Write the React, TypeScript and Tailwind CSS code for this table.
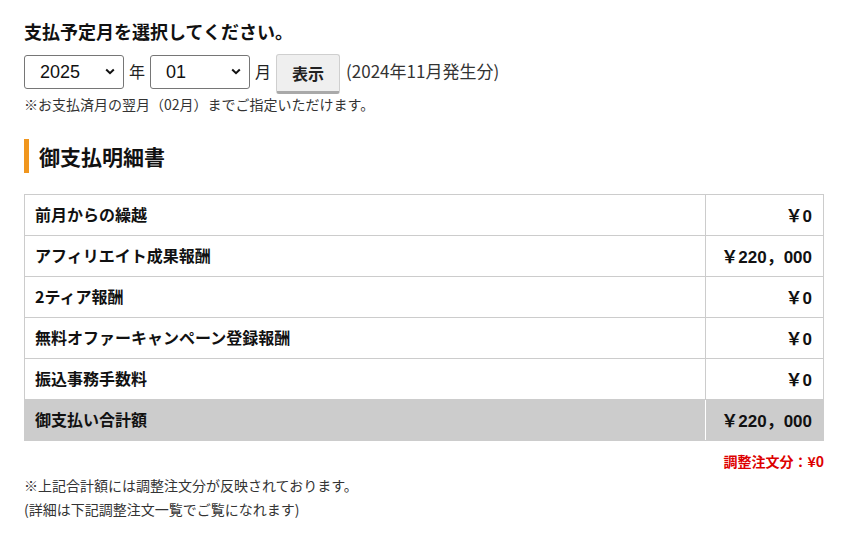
import React from 'react'

const rows = [
  { label: '前月からの繰越', value: '￥0' },
  { label: 'アフィリエイト成果報酬', value: '￥220，000' },
  { label: '2ティア報酬', value: '￥0' },
  { label: '無料オファーキャンペーン登録報酬', value: '￥0' },
  { label: '振込事務手数料', value: '￥0' },
]

function Chevron() {
  return (
    <svg className="pointer-events-none absolute right-[9px] top-[13px]" width="10" height="7" viewBox="0 0 10 7">
      <path d="M1.2 1.5 L5 5.2 L8.8 1.5" fill="none" stroke="#111" strokeWidth="2" />
    </svg>
  )
}

function Select({ value, options }: { value: string; options: string[] }) {
  return (
    <div className="relative">
      <select
        defaultValue={value}
        className="appearance-none w-[100px] h-[34px] rounded-[3px] border border-[#767676] bg-white pl-[15px] text-[18px] text-[#111] outline-none"
        style={{ fontFamily: '"Liberation Sans", Arial, sans-serif' }}
      >
        {options.map(o => (
          <option key={o} value={o}>{o}</option>
        ))}
      </select>
      <Chevron />
    </div>
  )
}

export default function App() {
  const months = ['01', '02', '03', '04', '05', '06', '07', '08', '09', '10', '11', '12']
  return (
    <div
      className="w-[861px] min-h-[534px] bg-white px-6 pt-[18px] text-[#222]"
      style={{ fontFamily: '"Noto Sans CJK JP", "Noto Sans", sans-serif' }}
    >
      <h2 className="text-[18px] font-bold leading-[26px] text-[#111]">支払予定月を選択してください。</h2>

      <div className="mt-[11px] flex items-start">
        <Select value="2025" options={['2024', '2025', '2026']} />
        <span className="mx-[5px] mt-[4px] text-[16px] leading-[24px]">年</span>
        <Select value="01" options={months} />
        <span className="mx-[5px] mt-[4px] text-[16px] leading-[24px]">月</span>
        <button className="-mt-px h-[40px] w-[64px] rounded-[3px] border border-[#cfcfcf] border-b-[3px] border-b-[#a9a9a9] bg-[#efefef] text-[16px] font-bold text-[#222]">
          表示
        </button>
        <span className="ml-[6px] mt-[4px] text-[17px] leading-[24px] text-[#333]">(2024年11月発生分)</span>
      </div>
      <p className="mt-[1px] text-[14px] leading-[18px] text-[#333]">※お支払済月の翌月（02月）までご指定いただけます。</p>

      <div className="mt-[26px] flex items-center h-[34px] border-l-[5px] border-[#f0961e] pl-[10px]">
        <h3 className="text-[21px] font-bold leading-[28px] text-[#111]">御支払明細書</h3>
      </div>

      <table className="mt-[21px] w-[800px] border-collapse text-[#111]">
        <tbody>
          {rows.map(r => (
            <tr key={r.label} className="h-[41px]">
              <td className="border border-[#cccccc] pl-[10px] pb-[3px] text-[16px] font-bold">{r.label}</td>
              <td
                className="w-[118px] border border-[#cccccc] pr-[11px] pt-[3px] text-right text-[17px] font-bold"
                style={{ fontFamily: '"Liberation Sans", "Noto Sans CJK JP", sans-serif' }}
              >
                {r.value}
              </td>
            </tr>
          ))}
          <tr className="h-[41px] bg-[#cccccc]">
            <td className="border border-[#cccccc] border-r-white pl-[10px] pb-[3px] text-[16px] font-bold">御支払い合計額</td>
            <td
              className="w-[118px] border border-[#cccccc] border-l-white pr-[11px] pt-[3px] text-right text-[17px] font-bold"
              style={{ fontFamily: '"Liberation Sans", "Noto Sans CJK JP", sans-serif' }}
            >
              ￥220，000
            </td>
          </tr>
        </tbody>
      </table>

      <div className="mt-[11px] w-[800px] text-right text-[14px] font-bold leading-[18px] text-[#dd0000]">調整注文分：¥0</div>
      <p className="mt-[3px] text-[14px] leading-[24px] text-[#333]">※上記合計額には調整注文分が反映されております。</p>
      <p className="text-[14px] leading-[24px] text-[#333]">(詳細は下記調整注文一覧でご覧になれます)</p>
    </div>
  )
}
